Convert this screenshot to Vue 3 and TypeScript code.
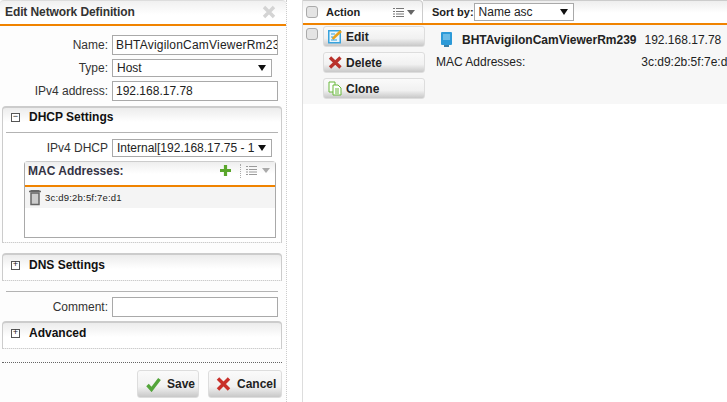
<script setup lang="ts">
const listPath = "M0 1.500h2M3 1.500h8M0 4.500h2M3 4.500h8M0 7h2M3 7h8M0 9.500h2M3 9.500h8";
</script>

<template>
  <div class="page">
    <section class="editor">
      <header class="editor-head">
        <span>Edit Network Definition</span>
        <svg class="close" width="14" height="14" viewBox="0 0 14 14"><path d="M2 2l10 10M12 2L2 12" stroke="#d4d4d4" stroke-width="3.4" /></svg>
      </header>

      <div class="row row-first">
        <label>Name:</label>
        <div class="input clip name">BHTAvigilonCamViewerRm239</div>
      </div>
      <div class="row row-select">
        <label>Type:</label>
        <div class="select">Host<i class="arrow"></i></div>
      </div>
      <div class="row row-ip">
        <label>IPv4 address:</label>
        <div class="input">192.168.17.78</div>
      </div>

      <div class="group dhcp">
        <div class="group-title"><span class="tog">−</span>DHCP Settings</div>
        <div class="rule"></div>
        <div class="row row-dhcp">
          <label>IPv4 DHCP</label>
          <div class="select">Internal[192.168.17.75 - 1<i class="arrow"></i></div>
        </div>
        <div class="mac">
          <div class="mac-head">
            <span>MAC Addresses:</span>
            <div class="mac-tools">
              <svg width="13" height="13" viewBox="0 0 13 13"><path d="M6.500 1v11M1 6.500h11" stroke="#5aa62c" stroke-width="3.200" /></svg>
              <span class="sep"></span>
              <svg width="11" height="11" viewBox="0 0 11 11"><path :d="listPath" stroke="#9a9a9a" /></svg>
              <i class="caret"></i>
            </div>
          </div>
          <div class="mac-row">
            <svg width="12" height="16" viewBox="0 0 12 16"><path d="M0 1.500h12M1.500 0h9" stroke="#666" stroke-width="1.500" /><path d="M2 3h8v11.500H2z" fill="#ccc" stroke="#666" stroke-width="1.500" /></svg>
            <span>3c:d9:2b:5f:7e:d1</span>
          </div>
        </div>
      </div>

      <div class="group closed dns">
        <div class="group-title"><span class="tog">+</span>DNS Settings</div>
      </div>
      <div class="rule rule-comment"></div>
      <div class="row row-comment">
        <label>Comment:</label>
        <div class="input"></div>
      </div>
      <div class="group closed advanced">
        <div class="group-title"><span class="tog">+</span>Advanced</div>
      </div>

      <footer class="editor-foot">
        <button class="btn save">
          <svg width="15" height="15" viewBox="0 0 15 15"><path d="M1.500 8l4 4.500L13.500 2" fill="none" stroke="#53a53a" stroke-width="3.400" /></svg>
          Save
        </button>
        <button class="btn cancel">
          <svg width="15" height="14" viewBox="0 0 15 14"><path d="M2 1.500l11 11M13 1.500l-11 11" stroke="#c9302a" stroke-width="3.500" /></svg>
          Cancel
        </button>
      </footer>
    </section>

    <section class="results">
      <header class="results-head">
        <div class="action-cell">
          <span class="check"></span>
          <strong>Action</strong>
          <div class="action-tools">
            <svg width="11" height="11" viewBox="0 0 11 11"><path :d="listPath" stroke="#777" /></svg>
            <i class="caret dark"></i>
          </div>
        </div>
        <div class="sort-cell">
          <strong>Sort by:</strong>
          <div class="select sort">Name asc<i class="arrow"></i></div>
        </div>
      </header>
      <div class="result-row">
        <span class="check"></span>
        <div class="actions">
          <button class="act">
            <svg width="15" height="15" viewBox="0 0 15 15"><rect x=".75" y="1.750" width="11.500" height="12" fill="#eaf6fc" stroke="#38a3dd" stroke-width="1.500" /><path d="M4.500 10L13 2" stroke="#e8a21d" stroke-width="2.600" /><path d="M3 8h2M3 5h4M3 11h6" stroke="#38a3dd" /></svg>
            Edit
          </button>
          <button class="act">
            <svg width="15" height="13" viewBox="0 0 15 13"><path d="M2 1.500l10.500 10M12.500 1.500L2 11.500" stroke="#b9322b" stroke-width="3.300" /></svg>
            Delete
          </button>
          <button class="act">
            <svg width="15" height="15" viewBox="0 0 15 15"><path d="M1 1h6v10H1z" fill="#fff" stroke="#69b83b" /><path d="M5 4h5l3 3v7H5z" fill="#fff" stroke="#69b83b" /><path d="M7 8h4M7 10h4M7 12h4" stroke="#69b83b" /></svg>
            Clone
          </button>
        </div>
        <div class="detail">
          <div class="detail-top">
            <svg width="11" height="16" viewBox="0 0 11 16"><rect width="11" height="13" rx="1" fill="#2c9ad8" /><path d="M2 3h7M2 5h7M2 7h7" stroke="#a9dcf5" /><path d="M3 13h5v2H3z" fill="#3a7ea6" /></svg>
            <strong>BHTAvigilonCamViewerRm239</strong>
            <span>192.168.17.78</span>
          </div>
          <div class="detail-mac">
            <span>MAC Addresses:</span>
            <span class="mac-value">3c:d9:2b:5f:7e:d1</span>
          </div>
        </div>
      </div>
    </section>
  </div>
</template>

<style>
html, body { margin: 0; overflow: hidden; background: #fff; }
</style>

<style scoped>
.page {
  width: 727px;
  height: 402px;
  overflow: hidden;
  display: flex;
  font: 12px "Liberation Sans", Arial, sans-serif;
  color: #222;
  background: #fff;
}
.editor {
  box-sizing: border-box;
  width: 287px;
  height: 402px;
  flex: none;
  background: #fdfdfd;
  border-right: 1px dotted #ccc;
}
.editor-head {
  box-sizing: border-box;
  height: 26px;
  display: flex;
  align-items: center;
  justify-content: space-between;
  padding: 0 10px 2px 5px;
  border-top: 1px solid #ddd;
  border-bottom: 2px solid #f08300;
  border-radius: 4px 4px 0 0;
  background: linear-gradient(#f0f0f0, #fff 60%);
  font-weight: bold;
  letter-spacing: -0.1px;
  color: #333;
}
.close { display: block; }
.row { display: flex; align-items: center; }
.row label {
  width: 108px;
  margin-right: 4px;
  text-align: right;
  color: #333;
  flex: none;
}
.input {
  box-sizing: border-box;
  width: 166px;
  height: 20px;
  line-height: 18px;
  padding: 0 3px;
  border: 1px solid #a9a9a9;
  background: #fff;
  color: #222;
  white-space: nowrap;
}
.clip { overflow: hidden; }
.name { letter-spacing: 0.2px; }
.select {
  box-sizing: border-box;
  position: relative;
  width: 160px;
  height: 18px;
  line-height: 16px;
  padding-left: 4px;
  border: 1px solid #a9a9a9;
  background: #fff;
  white-space: nowrap;
  overflow: hidden;
}
.arrow {
  position: absolute;
  right: 3px;
  top: 0;
  width: 13px;
  height: 16px;
  background: #fff;
}
.arrow::after {
  content: "";
  position: absolute;
  left: 3px;
  top: 5px;
  border: 4px solid transparent;
  border-top: 6px solid #111;
  border-bottom: 0;
}
.row-first { margin-top: 9px; }
.row-select { margin-top: 4px; }
.row-ip { margin-top: 4px; }
.group {
  box-sizing: border-box;
  margin: 5px 4px 0 2px;
  border: 1px solid #ccc;
  border-top-width: 2px;
  border-bottom: 1px dotted #ccc;
  border-radius: 4px 4px 0 0;
  background: linear-gradient(#ececec, #fff 14px);
}
.dhcp { height: 137px; }
.group-title {
  height: 20px;
  display: flex;
  align-items: center;
  padding-left: 8px;
  font-weight: bold;
  color: #111;
}
.dhcp .group-title {
  height: 18px;
  margin-bottom: 6px;
}
.tog {
  box-sizing: border-box;
  width: 9px;
  height: 9px;
  margin-right: 9px;
  border: 1px solid #555;
  font: 9px/7px "Liberation Mono", monospace;
  text-align: center;
  color: #222;
  background: #fff;
}
.rule {
  height: 1px;
  margin: 0 3px;
  background: #b3b3b3;
}
.row-dhcp { margin-top: 6px; }
.row-dhcp label { width: 105px; }
.mac {
  box-sizing: border-box;
  margin: 4px 5px 0 21px;
  width: 252px;
  height: 77px;
  border: 1px solid #a9a9a9;
  border-top-color: #ccc;
  border-radius: 4px 4px 0 0;
  background: #fff;
}
.mac-head {
  box-sizing: border-box;
  height: 25px;
  display: flex;
  align-items: center;
  justify-content: space-between;
  padding: 0 5px 6px 3px;
  border-bottom: 2px solid #f08300;
  background: linear-gradient(#eee, #fff 12px);
  font-weight: bold;
  color: #334;
}
.mac-tools { display: flex; align-items: center; }
.sep {
  height: 14px;
  margin: 0 5px 0 8px;
  border-left: 1px dotted #aaa;
}
.caret {
  margin-left: 5px;
  border: 4px solid transparent;
  border-top: 5px solid #aaa;
  border-bottom: 0;
}
.caret.dark {
  margin-left: 3px;
  border-top-color: #666;
}
.mac-row {
  height: 21px;
  display: flex;
  align-items: center;
  gap: 4px;
  padding-left: 4px;
  background: #f4f4f4;
  font-size: 9.500px;
  letter-spacing: 0.2px;
}
.closed { height: 28px; }
.dns { margin-top: 10px; }
.rule-comment { margin: 10px 8px 0 6px; }
.row-comment { margin-top: 5px; }
.advanced { margin-top: 4px; }
.editor-foot {
  display: flex;
  justify-content: flex-end;
  gap: 9px;
  margin: 13px 4px 0 2px;
  padding-top: 7px;
  border-top: 1px dotted #666;
}
.btn, .act {
  display: flex;
  align-items: center;
  font: bold 12px "Liberation Sans", Arial, sans-serif;
  color: #222;
  border: 1px solid #ddd;
  border-radius: 3px;
  background: linear-gradient(#fafafa, #f1f1f1 60%, #c8c8c8);
  padding: 0;
}
.btn { height: 28px; gap: 6px; }
.save { width: 62px; padding-left: 8px; }
.cancel { width: 74px; padding-left: 7px; }
.results {
  flex: none;
  width: 425px;
  margin-left: 15px;
  border-left: 1px solid #ddd;
}
.results-head {
  box-sizing: border-box;
  height: 25px;
  display: flex;
  font-size: 11px;
  border-bottom: 2px solid #f08300;
}
.action-cell {
  box-sizing: border-box;
  width: 120px;
  display: flex;
  align-items: center;
  padding-left: 3px;
  border: 1px solid #ccc;
  border-bottom: 0;
  border-left: 0;
  border-radius: 0 4px 0 0;
  background: linear-gradient(#eee, #fff 12px);
}
.check {
  box-sizing: border-box;
  flex: none;
  width: 12px;
  height: 12px;
  border: 1px solid #aaa;
  border-radius: 3px;
  background: #e4e4e4;
}
.action-cell strong { margin-left: 8px; font-weight: bold; }
.action-tools { display: flex; align-items: center; margin-left: auto; margin-right: 7px; }
.sort-cell {
  flex: 1;
  display: flex;
  align-items: center;
  padding-left: 9px;
  border-top: 1px solid #ccc;
  background: linear-gradient(#eee, #fff 12px);
}
.sort-cell strong { font-weight: bold; margin-right: 0; }
.sort { width: 100px; height: 18px; font-size: 12px; }
.result-row {
  display: flex;
  align-items: flex-start;
  height: 79px;
  background: #f7f7f7;
  padding-left: 3px;
}
.result-row > .check { margin-top: 3px; }
.actions {
  display: flex;
  flex-direction: column;
  gap: 5px;
  margin: 1px 0 0 5px;
}
.act {
  box-sizing: border-box;
  width: 102px;
  height: 21px;
  gap: 3px;
  padding-left: 4px;
}
.detail { flex: 1; margin-left: 11px; min-width: 0; }
.detail-top {
  display: flex;
  align-items: center;
  margin: 7px 0 0 5px;
  white-space: nowrap;
}
.detail-top strong { margin-left: 10px; font-weight: bold; }
.detail-top span { margin-left: 8px; }
.detail-mac {
  display: flex;
  justify-content: space-between;
  margin-top: 7px;
  white-space: nowrap;
}
.mac-value { margin-right: -6px; }
</style>
